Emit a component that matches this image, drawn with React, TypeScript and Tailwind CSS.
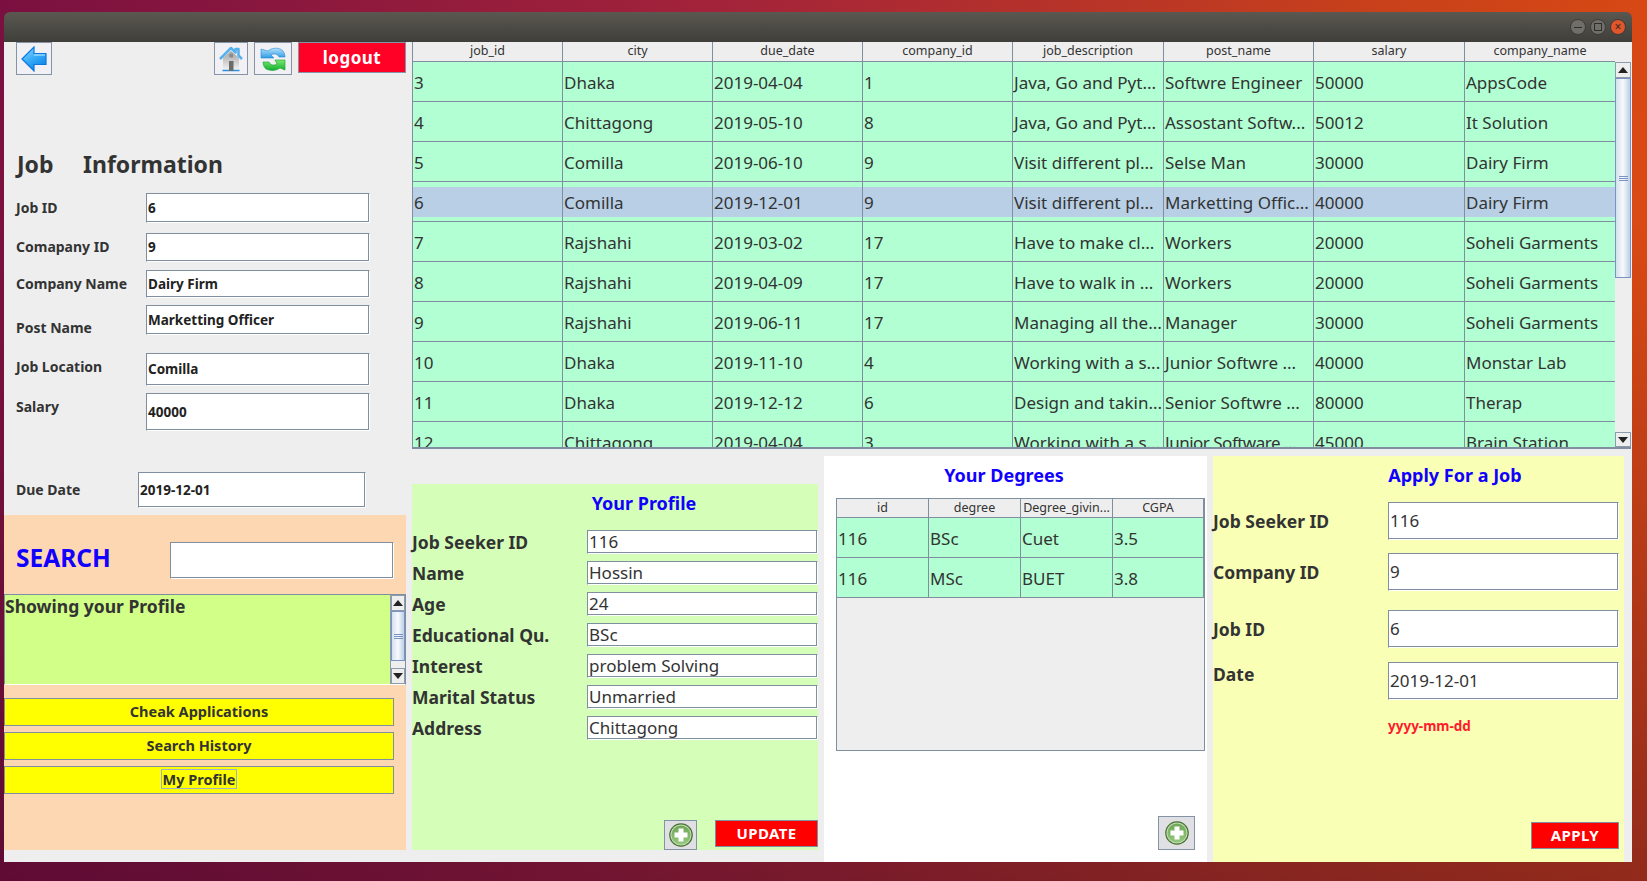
const font = "font-['Noto_Sans',sans-serif]";

const jobs = [
  ["3", "Dhaka", "2019-04-04", "1", "Java, Go and Pyt...", "Softwre Engineer", "50000", "AppsCode"],
  ["4", "Chittagong", "2019-05-10", "8", "Java, Go and Pyt...", "Assostant Softw...", "50012", "It Solution"],
  ["5", "Comilla", "2019-06-10", "9", "Visit different pl...", "Selse Man", "30000", "Dairy Firm"],
  ["6", "Comilla", "2019-12-01", "9", "Visit different pl...", "Marketting Offic...", "40000", "Dairy Firm"],
  ["7", "Rajshahi", "2019-03-02", "17", "Have to make cl...", "Workers", "20000", "Soheli Garments"],
  ["8", "Rajshahi", "2019-04-09", "17", "Have to walk in ...", "Workers", "20000", "Soheli Garments"],
  ["9", "Rajshahi", "2019-06-11", "17", "Managing all the...", "Manager", "30000", "Soheli Garments"],
  ["10", "Dhaka", "2019-11-10", "4", "Working with a s...", "Junior Softwre ...", "40000", "Monstar Lab"],
  ["11", "Dhaka", "2019-12-12", "6", "Design and takin...", "Senior Softwre ...", "80000", "Therap"],
  ["12", "Chittagong", "2019-04-04", "3", "Working with a s...", "Junior Software ...", "45000", "Brain Station"],
];

const jobCols = ["job_id", "city", "due_date", "company_id", "job_description", "post_name", "salary", "company_name"];
const jobWidths = ["w-[150px]", "w-[150px]", "w-[150px]", "w-[150px]", "w-[151px]", "w-[150px]", "w-[151px]", "w-[151px]"];

function Cell({ text, width }: { text: string; width: string }) {
  return (
    <div className={`${width} relative h-full shrink-0 border-r border-[#7f8fa0] flex items-center pl-[1px] pt-[3px] whitespace-nowrap overflow-hidden text-[17px] text-[#333] ${text === "Junior Software ..." ? "tracking-[-0.5px]" : ""}`}>
      {text}
    </div>
  );
}

function HeadCell({ text, width }: { text: string; width: string }) {
  return (
    <div className={`${width} h-full shrink-0 border-r border-[#7f8fa0] flex items-center justify-center whitespace-nowrap overflow-hidden text-[12.5px] text-[#333] bg-[#eeeeee]`}>
      {text}
    </div>
  );
}

function ScrollThumb({ className }: { className: string }) {
  return (
    <div className={`${className} border border-[#7a93c4] bg-gradient-to-r from-[#d4e0ef] via-[#f8fafc] to-[#bcd0e6] flex flex-col items-center justify-center gap-[1px]`}>
      <span className="block w-[9px] h-px bg-[#7a93c4]" />
      <span className="block w-[9px] h-px bg-[#7a93c4]" />
      <span className="block w-[9px] h-px bg-[#7a93c4]" />
    </div>
  );
}

function ArrowBtn({ down, className }: { down?: boolean; className: string }) {
  return (
    <div className={`${className} border border-[#8d9bad] bg-[#eeeeee] flex items-center justify-center`}>
      <svg width="10" height="6" viewBox="0 0 10 6">
        <path d={down ? "M0 0h10L5 6z" : "M5 0l5 6H0z"} fill="#222" />
      </svg>
    </div>
  );
}

function JobTable() {
  return (
    <div className="w-[1219px] h-[407px] border-b-2 border-l border-[#7f8fa0] flex">
      <div className="w-[1203px] flex flex-col overflow-hidden">
        <div className="h-[19px] shrink-0 flex border-b border-[#7f8fa0] box-content">
          {jobCols.map((c, i) => (
            <HeadCell key={c} text={c} width={jobWidths[i]} />
          ))}
        </div>
        {jobs.map((row, r) => (
          <div key={row[0]} className="h-[40px] shrink-0 border-b border-[#7f8fa0] relative bg-[#b1ffd2] flex">
            {r === 3 && <div className="absolute left-0 right-0 top-[5px] h-[30px] bg-[#b8cfe6]" />}
            {row.map((t, i) => (
              <Cell key={i} text={t} width={jobWidths[i]} />
            ))}
          </div>
        ))}
      </div>
      <div className="w-[16px] flex flex-col bg-[#eeeeee]">
        <div className="h-[20px] shrink-0" />
        <ArrowBtn className="h-[16px] shrink-0" />
        <ScrollThumb className="h-[200px] shrink-0" />
        <div className="flex-1" />
        <ArrowBtn down className="h-[15px] shrink-0" />
      </div>
    </div>
  );
}

function Input({ value, className }: { value?: string; className: string }) {
  return (
    <div className={`${className} bg-white border border-[#7f8fa0] border-r-white border-b-white shadow-[inset_-1px_-1px_0_#7f8fa0] flex items-center pl-[1px] whitespace-nowrap`}>
      {value}
    </div>
  );
}

function BackIcon() {
  return (
    <svg width="26" height="26" viewBox="0 0 26 26">
      <defs>
        <linearGradient id="back" x1="0" y1="0" x2="0.6" y2="1">
          <stop offset="0" stopColor="#9fdcff" />
          <stop offset="0.5" stopColor="#3fb0f8" />
          <stop offset="1" stopColor="#0a84e8" />
        </linearGradient>
      </defs>
      <path d="M1 13 13 1v6.5h12v11H13V25z" fill="url(#back)" stroke="#0a78e0" strokeWidth="1.2" strokeLinejoin="miter" />
      <path d="M13 9h11" stroke="#c8ecff" strokeWidth="1.2" />
    </svg>
  );
}

function HomeIcon() {
  return (
    <svg width="24" height="26" viewBox="0 0 24 26">
      <defs>
        <linearGradient id="wall" x1="0" y1="0" x2="0" y2="1">
          <stop offset="0" stopColor="#a0a0a0" />
          <stop offset="1" stopColor="#f6f6f6" />
        </linearGradient>
      </defs>
      <path d="M4 12v13h16V12L12 5z" fill="url(#wall)" />
      <path d="M3.5 24.5h17" stroke="#2a90e0" strokeWidth="1.5" />
      <rect x="10" y="15" width="4.5" height="10" fill="#6b6b6b" />
      <rect x="10.5" y="8" width="3.5" height="3.5" fill="#8a8a8a" />
      <path d="M1 13 12 2l4.5 4.5V3h3v6.5L23 13" fill="none" stroke="#55b0ee" strokeWidth="2.5" strokeLinejoin="round" />
    </svg>
  );
}

function RefreshIcon() {
  return (
    <svg width="26" height="26" viewBox="0 0 26 26">
      <defs>
        <linearGradient id="refBlue" x1="0" y1="0" x2="0" y2="1">
          <stop offset="0" stopColor="#b4e0f8" />
          <stop offset="1" stopColor="#2d9ce8" />
        </linearGradient>
        <linearGradient id="refGreen" x1="0" y1="0" x2="0" y2="1">
          <stop offset="0" stopColor="#7ce870" />
          <stop offset="1" stopColor="#12b030" />
        </linearGradient>
      </defs>
      <path d="M1 3l7 2c3-3 10-4 14-1 2 2 3 4 3 7h-6c-1-3-5-4-8-2l3 3H1z" fill="url(#refBlue)" stroke="#2288d8" strokeWidth="0.6" />
      <path d="M25 14v10l-5-2c-4 3-10 3-14 1-2-2-3-4-3-7h6c1 3 5 4 8 2l-2-4z" fill="url(#refGreen)" stroke="#14a02c" strokeWidth="0.6" />
    </svg>
  );
}

function PlusIcon() {
  return (
    <svg className="w-[24px] h-[24px]" viewBox="0 0 24 24">
      <defs>
        <linearGradient id="plusFill" x1="0" y1="0" x2="0" y2="1">
          <stop offset="0" stopColor="#6fa659" />
          <stop offset="1" stopColor="#94c87c" />
        </linearGradient>
      </defs>
      <circle cx="12" cy="12" r="11.8" fill="#44702f" />
      <circle cx="12" cy="12" r="10.6" fill="#c6dcb6" />
      <circle cx="12" cy="12" r="9.6" fill="url(#plusFill)" />
      <path d="M9.5 5.5h5v4h4v5h-4v4h-5v-4h-4v-5h4z" fill="#fff" />
    </svg>
  );
}

function IconBtn({ children, className }: { children: React.ReactNode; className: string }) {
  return (
    <div className={`${className} shrink-0 border border-[#8493a5] flex items-center justify-center`}>{children}</div>
  );
}

function Label({ text, className }: { text: string; className: string }) {
  return <div className={`${className} font-bold whitespace-nowrap text-[#333]`}>{text}</div>;
}

function JobField({ label, value, labelTop, inputTop, h, w = "w-[224px]", left = "w-[142px]" }: { label: string; value: string; labelTop: string; inputTop: string; h: string; w?: string; left?: string }) {
  return (
    <div className="flex items-start">
      <Label text={label} className={`${left} ${labelTop} text-[14px] pl-[12px] leading-[20px]`} />
      <Input value={value} className={`${w} ${h} ${inputTop} text-[13.5px] font-bold text-[#222]`} />
    </div>
  );
}

function LeftColumn() {
  return (
    <div className="w-[402px] shrink-0 flex flex-col">
      <div className="h-[34px] flex items-start">
        <IconBtn className="ml-[12px] w-[36px] h-[33px] bg-[#f1f1f5]"><BackIcon /></IconBtn>
        <IconBtn className="ml-[162px] w-[34px] h-[33px] bg-[#f1f1f5]"><HomeIcon /></IconBtn>
        <IconBtn className="ml-[6px] w-[38px] h-[33px] bg-[#f1f1f5]"><RefreshIcon /></IconBtn>
        <div className="ml-[6px] w-[108px] h-[31px] bg-[#ff0026] border border-[#8493a5] flex items-center justify-center text-white font-bold text-[17px] tracking-[0.5px]">logout</div>
      </div>
      <div className="mt-[67px] pl-[13px] h-[42px] flex items-center text-[23px] font-bold text-[#333] whitespace-nowrap">
        <span className="w-[66px]">Job</span>
        <span>Information</span>
      </div>
      <JobField label="Job ID" value="6" labelTop="mt-[13px]" inputTop="mt-[8px]" h="h-[30px]" />
      <JobField label="Comapany ID" value="9" labelTop="mt-[14px]" inputTop="mt-[10px]" h="h-[29px]" />
      <JobField label="Company Name" value="Dairy Firm" labelTop="mt-[12px]" inputTop="mt-[8px]" h="h-[28px]" />
      <JobField label="Post Name" value="Marketting Officer" labelTop="mt-[20px]" inputTop="mt-[7px]" h="h-[30px]" />
      <JobField label="Job Location" value="Comilla" labelTop="mt-[19px]" inputTop="mt-[15px]" h="h-[33px]" />
      <JobField label="Salary" value="40000" labelTop="mt-[11px]" inputTop="mt-[7px]" h="h-[38px]" />
      <JobField label="Due Date" value="2019-12-01" labelTop="mt-[49px]" inputTop="mt-[41px]" h="h-[36px]" w="w-[228px]" left="w-[134px]" />

      <div className="mt-[7px] h-[335px] bg-[#fdd7b1] flex flex-col">
        <div className="flex items-start">
          <div className="w-[166px] pl-[12px] mt-[24px] h-[38px] leading-[38px] text-[24.5px] font-bold text-[#1100ff]">SEARCH</div>
          <Input className="mt-[27px] w-[224px] h-[37px]" />
        </div>
        <div className="mt-[15px] h-[91px] border border-[#7f8fa0] border-b-white flex bg-[#d1ff87]">
          <div className="flex-1 text-[17.5px] font-bold text-[#333] leading-[20px] pt-[1px]">Showing your Profile</div>
          <div className="w-[15px] flex flex-col bg-[#eeeeee] border-l border-[#8d9bad]">
            <ArrowBtn className="h-[16px] shrink-0" />
            <ScrollThumb className="h-[50px] shrink-0" />
            <div className="flex-1" />
            <ArrowBtn down className="h-[16px] shrink-0" />
          </div>
        </div>
        <div className="mt-[13px] flex flex-col gap-[6px] w-[390px]">
          <YellowBtn text="Cheak Applications" />
          <YellowBtn text="Search History" />
          <YellowBtn text="My Profile" focused />
        </div>
      </div>
      <div className="h-[12px]" />
    </div>
  );
}

function YellowBtn({ text, focused }: { text: string; focused?: boolean }) {
  return (
    <div className="h-[28px] bg-[#ffff00] border border-[#7f8fa0] pb-[2px] flex items-center justify-center text-[14.5px] font-bold text-[#333]">
      <span className={focused ? "border border-[#9db0cc] px-px leading-[18px]" : "leading-[18px]"}>{text}</span>
    </div>
  );
}

const profile = [
  ["Job Seeker ID", "116"],
  ["Name", "Hossin"],
  ["Age", "24"],
  ["Educational Qu.", "BSc"],
  ["Interest", "problem Solving"],
  ["Marital Status", "Unmarried"],
  ["Address", "Chittagong"],
];

function ProfilePanel() {
  return (
    <div className="w-[406px] shrink-0 mt-[35px] h-[366px] bg-[#d5ffb8] flex flex-col">
      <div className="pt-[8px] h-[46px] text-center pl-[58px] text-[18px] font-bold text-[#1100ff] leading-[22px]">Your Profile</div>
      <div className="flex flex-col gap-[7px]">
        {profile.map(([l, v]) => (
          <div key={l} className="flex items-center h-[24px]">
            <Label text={l} className="w-[175px] text-[17.5px]" />
            <Input value={v} className="w-[231px] h-[24px] text-[17px] text-[#333]" />
          </div>
        ))}
      </div>
      <div className="mt-auto flex items-start">
        <IconBtn className="ml-[252px] w-[33px] h-[30px] bg-[#dfdfe4]"><PlusIcon /></IconBtn>
        <div className="ml-[18px] w-[103px] h-[27px] bg-[#ff0000] border border-[#7f8fa0] flex items-center justify-center text-white font-bold text-[15px] tracking-[0.4px]">UPDATE</div>
      </div>
    </div>
  );
}

const degrees = [
  ["116", "BSc", "Cuet", "3.5"],
  ["116", "MSc", "BUET", "3.8"],
];

function DegreePanel() {
  return (
    <div className="ml-[6px] w-[383px] shrink-0 mt-[7px] h-[406px] bg-white flex flex-col">
      <div className="pt-[8px] h-[42px] text-center pr-[23px] text-[18px] font-bold text-[#1100ff] leading-[22px]">Your Degrees</div>
      <div className="ml-[12px] w-[369px] h-[253px] border border-[#7f8fa0] bg-[#eeeeee] flex flex-col">
        <div className="h-[18px] shrink-0 flex border-b border-[#7f8fa0] box-content">
          <HeadCell text="id" width="w-[92px]" />
          <HeadCell text="degree" width="w-[92px]" />
          <HeadCell text="Degree_givin..." width="w-[92px]" />
          <HeadCell text="CGPA" width="w-[91px]" />
        </div>
        {degrees.map((row) => (
          <div key={row[1]} className="h-[40px] shrink-0 flex bg-[#b1ffd2] border-b border-[#7f8fa0]">
            <Cell text={row[0]} width="w-[92px]" />
            <Cell text={row[1]} width="w-[92px]" />
            <Cell text={row[2]} width="w-[92px]" />
            <Cell text={row[3]} width="w-[91px]" />
          </div>
        ))}
      </div>
      <div className="mt-[65px] ml-[334px]">
        <IconBtn className="w-[37px] h-[34px] bg-[#dfdfe4]"><PlusIcon /></IconBtn>
      </div>
    </div>
  );
}

function ApplyField({ label, value, top, labelTop }: { label: string; value: string; top: string; labelTop: string }) {
  return (
    <div className="flex items-start">
      <Label text={label} className={`w-[175px] text-[17.5px] leading-[22px] ${labelTop}`} />
      <Input value={value} className={`w-[231px] h-[38px] text-[17px] text-[#333] ${top}`} />
    </div>
  );
}

function ApplyPanel() {
  return (
    <div className="ml-[6px] w-[411px] shrink-0 mt-[7px] h-[406px] bg-[#f9ffb4] flex flex-col">
      <div className="pt-[8px] h-[46px] text-center pl-[73px] text-[18px] font-bold text-[#1100ff] leading-[22px]">Apply For a Job</div>
      <ApplyField label="Job Seeker ID" value="116" top="" labelTop="mt-[8px]" />
      <ApplyField label="Company ID" value="9" top="mt-[13px]" labelTop="mt-[21px]" />
      <ApplyField label="Job ID" value="6" top="mt-[19px]" labelTop="mt-[27px]" />
      <ApplyField label="Date" value="2019-12-01" top="mt-[14px]" labelTop="mt-[15px]" />
      <div className="ml-[175px] mt-[17px] text-[13.5px] font-bold text-[#ff1a2e] leading-[18px]">yyyy-mm-dd</div>
      <div className="mt-auto mb-[13px] ml-[318px] w-[88px] h-[27px] bg-[#ff0000] border border-[#7f8fa0] flex items-center justify-center text-white font-bold text-[15px] tracking-[0.4px]">APPLY</div>
    </div>
  );
}

function WinButton({ children, className }: { children: React.ReactNode; className: string }) {
  return (
    <div className={`${className} w-[16px] h-[16px] rounded-full border border-[#3c3b37] flex items-center justify-center`}>{children}</div>
  );
}

export default function App() {
  return (
    <div className={`${font} w-[1647px] h-[881px] overflow-hidden bg-[linear-gradient(to_bottom,transparent_25%,rgba(50,0,40,0.45)_100%),linear-gradient(100deg,#7a1040_0%,#a3233a_40%,#c6401c_75%,#e04d10_100%)]`}>
      <div className="pl-[4px] pt-[12px]">
        <div className="w-[1628px] h-[850px] flex flex-col overflow-hidden rounded-t-[6px]">
          <div className="h-[30px] shrink-0 bg-gradient-to-b from-[#5a5850] to-[#3f3e3a] flex items-center justify-end gap-[4px] pr-[6px]">
            <WinButton className="bg-[#6f6e68]"><span className="block w-[8px] h-px bg-[#2e2e2b]" /></WinButton>
            <WinButton className="bg-[#6f6e68]"><span className="block w-[8px] h-[8px] border border-[#2e2e2b]" /></WinButton>
            <WinButton className="bg-[#e0552a] text-[12px] leading-none text-[#3c2a20]">×</WinButton>
          </div>
          <div className="flex-1 bg-[#eeeeee] flex min-h-0">
            <LeftColumn />
            <div className="ml-[6px] flex flex-col">
              <JobTable />
              <div className="flex">
                <ProfilePanel />
                <DegreePanel />
                <ApplyPanel />
              </div>
            </div>
          </div>
        </div>
      </div>
    </div>
  );
}
